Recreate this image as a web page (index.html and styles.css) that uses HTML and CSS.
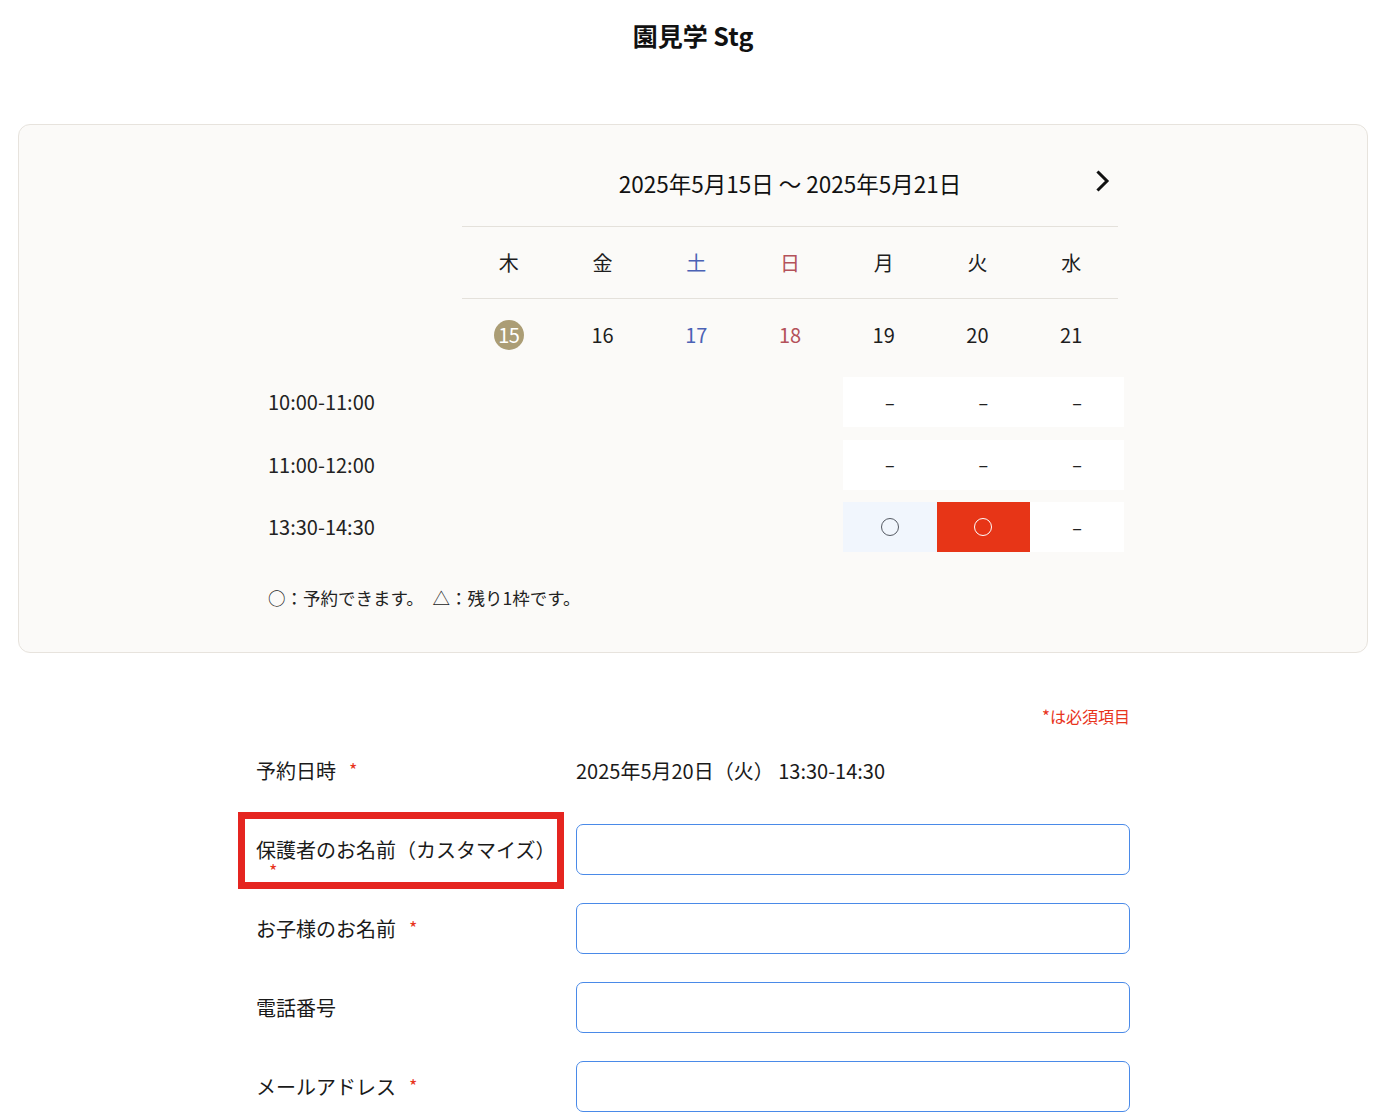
FILE: index.html
```html
<!DOCTYPE html>
<html lang="ja">
<head>
<meta charset="utf-8">
<title>園見学 Stg</title>
<link rel="stylesheet" href="styles.css">
</head>
<body>
<div class="page">
<header class="site-header">
  <h1 class="site-title">園見学 Stg</h1>
</header>

<section class="card">
  <div class="cal">
    <div class="cal-grid">
      <div class="cal-spacer"></div>
      <div class="cal-main">
        <div class="range-row">
          <span></span>
          <span class="range-text">2025年5月15日 〜 2025年5月21日</span>
          <button class="next-btn" type="button" aria-label="次の週">
            <svg width="14" height="22" viewBox="0 0 14 22"><path d="M2.5 2.5 L11 11 L2.5 19.5" fill="none" stroke="#111" stroke-width="3" stroke-linecap="square"/></svg>
          </button>
        </div>
        <div class="week-row names">
          <div class="dc">木</div>
          <div class="dc">金</div>
          <div class="dc sat">土</div>
          <div class="dc sun">日</div>
          <div class="dc">月</div>
          <div class="dc">火</div>
          <div class="dc">水</div>
        </div>
        <div class="week-row dates">
          <div class="dc"><span class="today">15</span></div>
          <div class="dc">16</div>
          <div class="dc sat">17</div>
          <div class="dc sun">18</div>
          <div class="dc">19</div>
          <div class="dc">20</div>
          <div class="dc">21</div>
        </div>
      </div>
    </div>

    <div class="slots">
      <div class="slot-row">
        <div class="slot-time">10:00-11:00</div>
        <div class="cell"></div><div class="cell"></div><div class="cell"></div><div class="cell"></div>
        <div class="cell open">–</div><div class="cell open">–</div><div class="cell open">–</div>
      </div>
      <div class="slot-row">
        <div class="slot-time">11:00-12:00</div>
        <div class="cell"></div><div class="cell"></div><div class="cell"></div><div class="cell"></div>
        <div class="cell open">–</div><div class="cell open">–</div><div class="cell open">–</div>
      </div>
      <div class="slot-row">
        <div class="slot-time">13:30-14:30</div>
        <div class="cell"></div><div class="cell"></div><div class="cell"></div><div class="cell"></div>
        <div class="cell avail"><span class="ring"></span></div>
        <div class="cell selected"><span class="ring"></span></div>
        <div class="cell open">–</div>
      </div>
    </div>

    <p class="legend">○：予約できます。　△：残り1枠です。</p>
  </div>
</section>

<form class="form">
  <p class="req-note"><span class="mark">*</span>は必須項目</p>

  <div class="row">
    <div class="label">予約日時<span class="star">*</span></div>
    <div class="value">2025年5月20日（火） 13:30-14:30</div>
  </div>

  <div class="row">
    <div class="label highlighted">保護者のお名前（カスタマイズ）<span class="star">*</span></div>
    <input class="field" type="text">
  </div>

  <div class="row">
    <div class="label">お子様のお名前<span class="star">*</span></div>
    <input class="field" type="text">
  </div>

  <div class="row">
    <div class="label">電話番号</div>
    <input class="field" type="tel">
  </div>

  <div class="row">
    <div class="label">メールアドレス<span class="star">*</span></div>
    <input class="field" type="email">
  </div>
</form>
</div>
</body>
</html>
```

FILE: styles.css
```css
* { box-sizing: border-box; }

html, body {
  margin: 0;
  padding: 0;
  background: #ffffff;
  color: #1a1a1a;
  font-family: "Noto Sans CJK JP", "Noto Sans", sans-serif;
}

.page {
  padding: 0 13px 0 18px;
}

.site-header {
  height: 124px;
  padding-top: 17px;
}

.site-title {
  margin: 0;
  text-align: center;
  font-size: 25px;
  line-height: 36px;
  font-weight: 700;
  color: #111;
}

.card {
  background: #fbfaf8;
  border: 1px solid #e7e3dd;
  border-radius: 12px;
  padding: 41px 0 41px;
}

.cal {
  width: 874px;
  margin: 0 auto;
  padding: 0 12px;
}

.cal-grid {
  display: grid;
  grid-template-columns: 194px 656px;
}

.range-row {
  display: grid;
  grid-template-columns: 1fr auto 1fr;
  align-items: center;
  height: 34px;
  margin-bottom: 26px;
}

.range-text {
  font-size: 22.5px;
  line-height: 34px;
  color: #111;
  white-space: nowrap;
}

.next-btn {
  justify-self: end;
  margin-right: 8px;
  margin-top: -4px;
  border: 0;
  background: transparent;
  padding: 0;
  width: 14px;
  height: 22px;
  display: flex;
  cursor: pointer;
}

.week-row {
  display: grid;
  grid-template-columns: repeat(7, 1fr);
  align-items: center;
}

.week-row.names {
  border-top: 1px solid #e4e1db;
  border-bottom: 1px solid #e4e1db;
  height: 73px;
}

.week-row.dates {
  height: 72px;
}

.dc {
  text-align: center;
  font-size: 20px;
  line-height: 30px;
  color: #1e1e1e;
}

.dc.sat { color: #4b62b5; }
.dc.sun { color: #b4525a; }

.today {
  display: inline-flex;
  align-items: center;
  justify-content: center;
  width: 30px;
  height: 30px;
  border-radius: 50%;
  background: #ab9d75;
  color: #ffffff;
  font-size: 20px;
  letter-spacing: -0.5px;
}

.slots {
  margin-top: 6px;
  margin-right: -6px;
  display: flex;
  flex-direction: column;
  gap: 12.5px;
}

.slot-row {
  display: grid;
  grid-template-columns: 200px repeat(7, 1fr);
  height: 50px;
}

.slot-time {
  font-size: 20px;
  line-height: 50px;
  color: #222;
}

.cell {
  display: flex;
  align-items: center;
  justify-content: center;
  font-size: 18px;
  line-height: 1;
  padding-bottom: 1px;
  color: #222;
}

.cell.open { background: #ffffff; }
.cell.avail { background: #f1f6fd; }
.cell.selected { background: #e73517; }

.ring {
  width: 18px;
  height: 18px;
  border-radius: 50%;
  border: 1.3px solid #555a63;
}

.cell.selected .ring { border-color: #ffffff; }

.legend {
  margin: 33px 0 0;
  font-size: 17.5px;
  line-height: 26px;
  color: #222;
}

.form {
  width: 874px;
  margin: 51px auto 0;
  display: flex;
  flex-direction: column;
  gap: 28px;
}

.req-note {
  margin: 0 0 -11px;
  text-align: right;
  font-size: 16px;
  line-height: 24px;
  color: #e8341c;
}

.req-note .mark {
  font-size: 17px;
  margin-right: 0;
}

.row {
  display: grid;
  grid-template-columns: 304px 1fr;
  column-gap: 16px;
  height: 51px;
}

.label {
  height: 51px;
  padding-top: 15.5px;
  font-size: 20px;
  line-height: 20px;
  color: #1a1a1a;
}

.label.highlighted {
  position: relative;
  line-height: 22px;
  padding-top: 14.5px;
}

.label.highlighted::after {
  content: "";
  position: absolute;
  left: -18px;
  right: -4px;
  top: -12px;
  bottom: -14px;
  border: 7px solid #e52520;
  pointer-events: none;
}

.star {
  margin-left: 13px;
  font-size: 18px;
  color: #e8341c;
  position: relative;
  top: -2px;
}

.value {
  font-size: 20px;
  line-height: 51px;
  color: #1a1a1a;
}

.field {
  width: 100%;
  height: 51px;
  border: 1px solid #4a8ae8;
  border-radius: 7px;
  background: #ffffff;
  font-family: inherit;
  font-size: 18px;
  padding: 0 14px;
  outline: none;
}
```
